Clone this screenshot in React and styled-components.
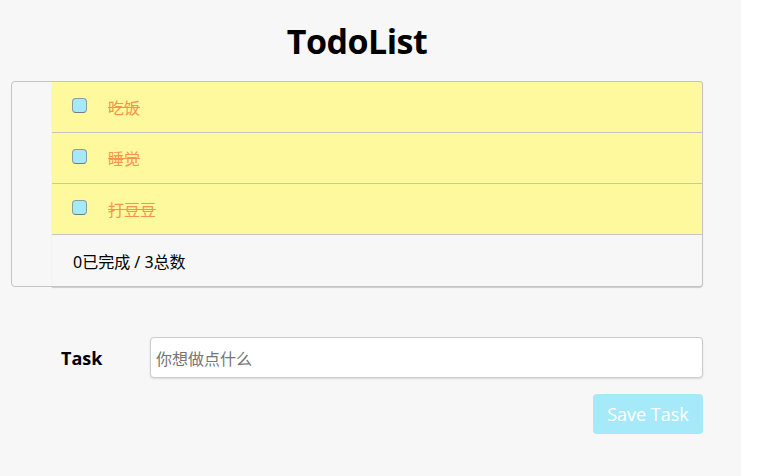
import React from "react";
import styled, { createGlobalStyle } from "styled-components";

const Global = createGlobalStyle`
  html, body { margin: 0; padding: 0; background: #ffffff; }
  body { font-family: "Noto Sans", "Noto Sans CJK SC", sans-serif; }
`;

const Page = styled.div`
  width: 741px;
  height: 476px;
  background: #f7f7f7;
  box-sizing: border-box;
  padding: 19px 38px 0 11px;
`;

const Title = styled.h1`
  margin: 0 0 18px;
  text-align: center;
  font-family: "Open Sans", "Noto Sans CJK SC", sans-serif;
  font-weight: 700;
  font-size: 34px;
  line-height: 44px;
  color: #000;
  letter-spacing: -0.5px;
`;

const Card = styled.div`
  border: 1px solid #c4c4c4;
  border-radius: 4px;
  padding-left: 40px;
  box-sizing: border-box;
`;

const List = styled.ul`
  list-style: none;
  margin: -1px -1px -1px 0;
  padding: 0;
  border: 1px solid #c4c4c4;
  border-left: none;
  border-radius: 0 4px 4px 0;
  overflow: hidden;
  box-shadow: 0 1px 1px rgba(0, 0, 0, 0.18);
`;

const Item = styled.li`
  display: flex;
  align-items: center;
  height: 50px;
  padding-left: 20px;
  background: #fff99d;
  border-bottom: 1px solid #c4c4c4;
`;

const Check = styled.span`
  width: 13px;
  height: 13px;
  margin-bottom: 3px;
  border: 1px solid #8d9ba1;
  border-bottom-color: #6f7c82;
  border-radius: 4px;
  background: #a6e9fb;
  flex: none;
`;

const ItemText = styled.span`
  margin-left: 21px;
  font-family: "Noto Sans CJK SC", sans-serif;
  font-size: 16px;
  color: #f7944c;
  text-decoration: line-through;
  text-decoration-thickness: 1px;
  margin-bottom: 1px;
`;

const Footer = styled.li`
  display: flex;
  align-items: center;
  height: 51px;
  padding-left: 21px;
  background: #f7f7f7;
  font-family: "Noto Sans", "Noto Sans CJK SC", sans-serif;
  font-size: 16px;
  color: #000;
`;

const Form = styled.div`
  margin-top: 50px;
  display: grid;
  grid-template-columns: 139px 1fr;
  row-gap: 16px;
  align-items: center;
`;

const Label = styled.label`
  padding-left: 50px;
  font-family: "Open Sans", "Noto Sans CJK SC", sans-serif;
  font-weight: 700;
  font-size: 18px;
  color: #000;
`;

const Input = styled.input`
  height: 41px;
  box-sizing: border-box;
  border: 1px solid #cccccc;
  border-radius: 4px;
  background: #fff;
  box-shadow: 0 1px 2px rgba(0, 0, 0, 0.12);
  padding: 0 5px;
  font-family: "Noto Sans CJK SC", sans-serif;
  font-size: 16px;
  outline: none;
  &::placeholder { color: #757575; }
`;

const Actions = styled.div`
  grid-column: 1 / 3;
  display: flex;
  justify-content: flex-end;
`;

const Button = styled.button`
  width: 110px;
  height: 40px;
  border: none;
  border-radius: 4px;
  background: #a6eafa;
  color: #fff;
  font-family: "Open Sans", sans-serif;
  font-size: 18px;
  padding: 0;
`;

const todos = ["吃饭", "睡觉", "打豆豆"];

export default function App() {
  return (
    <>
      <Global />
      <Page>
        <Title>TodoList</Title>
        <Card>
          <List>
            {todos.map((t) => (
              <Item key={t}>
                <Check />
                <ItemText>{t}</ItemText>
              </Item>
            ))}
            <Footer>0已完成 / 3总数</Footer>
          </List>
        </Card>
        <Form>
          <Label>Task</Label>
          <Input placeholder="你想做点什么" />
          <Actions>
            <Button>Save Task</Button>
          </Actions>
        </Form>
      </Page>
    </>
  );
}
